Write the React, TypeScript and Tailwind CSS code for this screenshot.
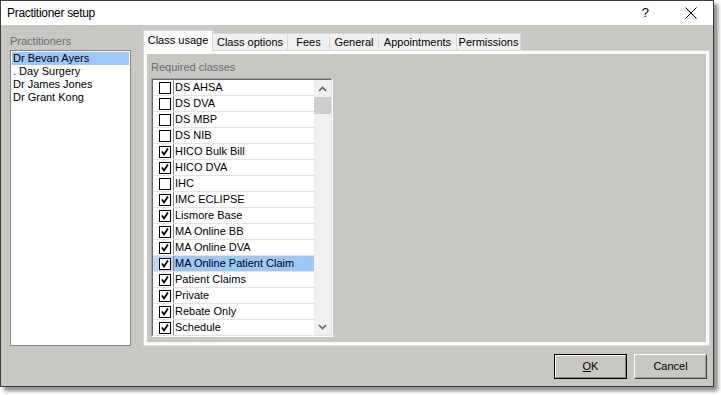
import React from 'react';

const practitioners = ['Dr Bevan Ayers', '. Day Surgery', 'Dr James Jones', 'Dr Grant Kong'];

const tabs = [
  { label: 'Class usage', w: 'w-[70px]' },
  { label: 'Class options', w: 'w-[75px]' },
  { label: 'Fees', w: 'w-[42px]' },
  { label: 'General', w: 'w-[49px]' },
  { label: 'Appointments', w: 'w-[78px]' },
  { label: 'Permissions', w: 'w-[64px]' },
];

const classes: { name: string; checked: boolean }[] = [
  { name: 'DS AHSA', checked: false },
  { name: 'DS DVA', checked: false },
  { name: 'DS MBP', checked: false },
  { name: 'DS NIB', checked: false },
  { name: 'HICO Bulk Bill', checked: true },
  { name: 'HICO DVA', checked: true },
  { name: 'IHC', checked: false },
  { name: 'IMC ECLIPSE', checked: true },
  { name: 'Lismore Base', checked: true },
  { name: 'MA Online BB', checked: true },
  { name: 'MA Online DVA', checked: true },
  { name: 'MA Online Patient Claim', checked: true },
  { name: 'Patient Claims', checked: true },
  { name: 'Private', checked: true },
  { name: 'Rebate Only', checked: true },
  { name: 'Schedule', checked: true },
];

function CheckBox({ checked }: { checked: boolean }) {
  return (
    <div className="flex h-[12px] w-[12px] items-center justify-center border border-black bg-white">
      {checked ? (
        <svg width="10" height="10" viewBox="0 0 10 10">
          <path d="M2 4.5 L4 7.5 L8 1.5" fill="none" stroke="#000" strokeWidth="1.7" />
        </svg>
      ) : null}
    </div>
  );
}

function Chevron({ up }: { up?: boolean }) {
  return (
    <svg width="9" height="6" viewBox="0 0 9 6">
      <path
        d={up ? 'M1 5 L4.5 1.5 L8 5' : 'M1 1 L4.5 4.5 L8 1'}
        fill="none"
        stroke="#606060"
        strokeWidth="1.6"
      />
    </svg>
  );
}

export default function App() {
  return (
    <div className="h-[395px] w-[721px] bg-white font-['Liberation_Sans',Arial,sans-serif] text-[11px] text-black">
      <div className="flex h-[387px] w-[714px] flex-col border border-[#3c3c3c] shadow-[4px_4px_4px_rgba(0,0,0,0.45)]">
        {/* title bar */}
        <div className="flex h-[24px] items-center bg-white pl-[6px] pr-[16px]">
          <span className="text-[12px] tracking-[-0.3px]">Practitioner setup</span>
          <span className="ml-auto text-[13px]">?</span>
          <svg className="ml-[36px]" width="12" height="12" viewBox="0 0 12 12">
            <path d="M0.5 0.5 L11.5 11.5 M11.5 0.5 L0.5 11.5" stroke="#000" strokeWidth="1" />
          </svg>
        </div>

        <div className="flex flex-1 flex-col bg-[#c8c7c2] pb-[7px] pl-[9px] pr-[3px] pt-[7px]">
          <div className="flex h-[314px]">
            {/* practitioners */}
            <div className="flex w-[121px] flex-col">
              <div className="flex h-[18px] items-center text-[#6b6b78]">Practitioners</div>
              <div className="h-[296px] border border-[#828790] bg-white p-px">
                {practitioners.map((p, i) => (
                  <div
                    key={p}
                    className={`h-[13px] pl-[1px] leading-[13px] ${i === 0 ? 'bg-[#99c9fb]' : ''}`}
                  >
                    {p}
                  </div>
                ))}
              </div>
            </div>

            {/* tab control */}
            <div className="ml-[12px] flex w-[567px] flex-col">
              <div className="flex h-[18px] items-end">
                {tabs.map((t, i) =>
                  i === 0 ? (
                    <div
                      key={t.label}
                      className={`${t.w} relative z-10 -mb-px flex h-[21px] items-center justify-center border border-b-0 border-[#d9d9d9] bg-[#fbfbfb] pb-[2px]`}
                    >
                      {t.label}
                    </div>
                  ) : (
                    <div
                      key={t.label}
                      className={`${t.w} flex h-[17px] items-center justify-center border border-b-0 border-l-0 border-[#d9d9d9] bg-[#f0f0f0]`}
                    >
                      {t.label}
                    </div>
                  ),
                )}
              </div>
              <div className="flex flex-1 flex-col border border-[#d9d9d9] bg-[#fbfbfb] p-[3px]">
                <div className="flex-1 bg-[#c8c7c2] pl-[4px] pt-[6px]">
                  <div className="h-[14px] leading-[14px] text-[#6b6b78]">Required classes</div>
                  <div className="mt-[4px] h-[259px] w-[182px] border border-[#a0a0a0] border-b-white border-r-white">
                    <div className="flex h-full w-full overflow-hidden border border-[#696969] border-b-[#e3e3e3] border-r-[#e3e3e3] bg-white">
                      <div className="w-[161px]">
                        {classes.map((c, i) => {
                          const sel = i === 11;
                          return (
                            <div key={c.name} className="flex h-[16px] border-b border-[#e3e3e3]">
                              <div
                                className={`flex w-[21px] items-center border-r border-[#8a8a8a] pl-[6px] ${
                                  sel ? 'bg-[#b9dafc]' : ''
                                }`}
                              >
                                <CheckBox checked={c.checked} />
                              </div>
                              <div
                                className={`flex-1 pl-[1px] leading-[15px] ${sel ? 'bg-[#99c9fb]' : ''}`}
                              >
                                {c.name}
                              </div>
                            </div>
                          );
                        })}
                      </div>
                      <div className="flex w-[17px] flex-col bg-[#f0f0f0]">
                        <div className="flex h-[17px] items-center justify-center">
                          <Chevron up />
                        </div>
                        <div className="h-[17px] bg-[#cdcdcd]" />
                        <div className="flex-1" />
                        <div className="flex h-[17px] items-center justify-center">
                          <Chevron />
                        </div>
                      </div>
                    </div>
                  </div>
                </div>
              </div>
            </div>
          </div>

          {/* buttons */}
          <div className="mt-[8px] flex justify-end gap-[7px] pr-[3px]">
            <button
              type="button"
              className="h-[25px] w-[73px] border border-black bg-[#c8c7c2] p-0"
            >
              <div className="flex h-full w-full items-center justify-center border border-white border-b-[#8a8a8a] border-r-[#8a8a8a]">
                <span>
                  <span className="underline">O</span>K
                </span>
              </div>
            </button>
            <button
              type="button"
              className="h-[25px] w-[73px] border border-white border-b-[#404040] border-r-[#404040] bg-[#c8c7c2] p-0"
            >
              <div className="flex h-full w-full items-center justify-center border border-transparent border-b-[#a0a0a0] border-r-[#a0a0a0]">
                Cancel
              </div>
            </button>
          </div>
        </div>
      </div>
    </div>
  );
}
